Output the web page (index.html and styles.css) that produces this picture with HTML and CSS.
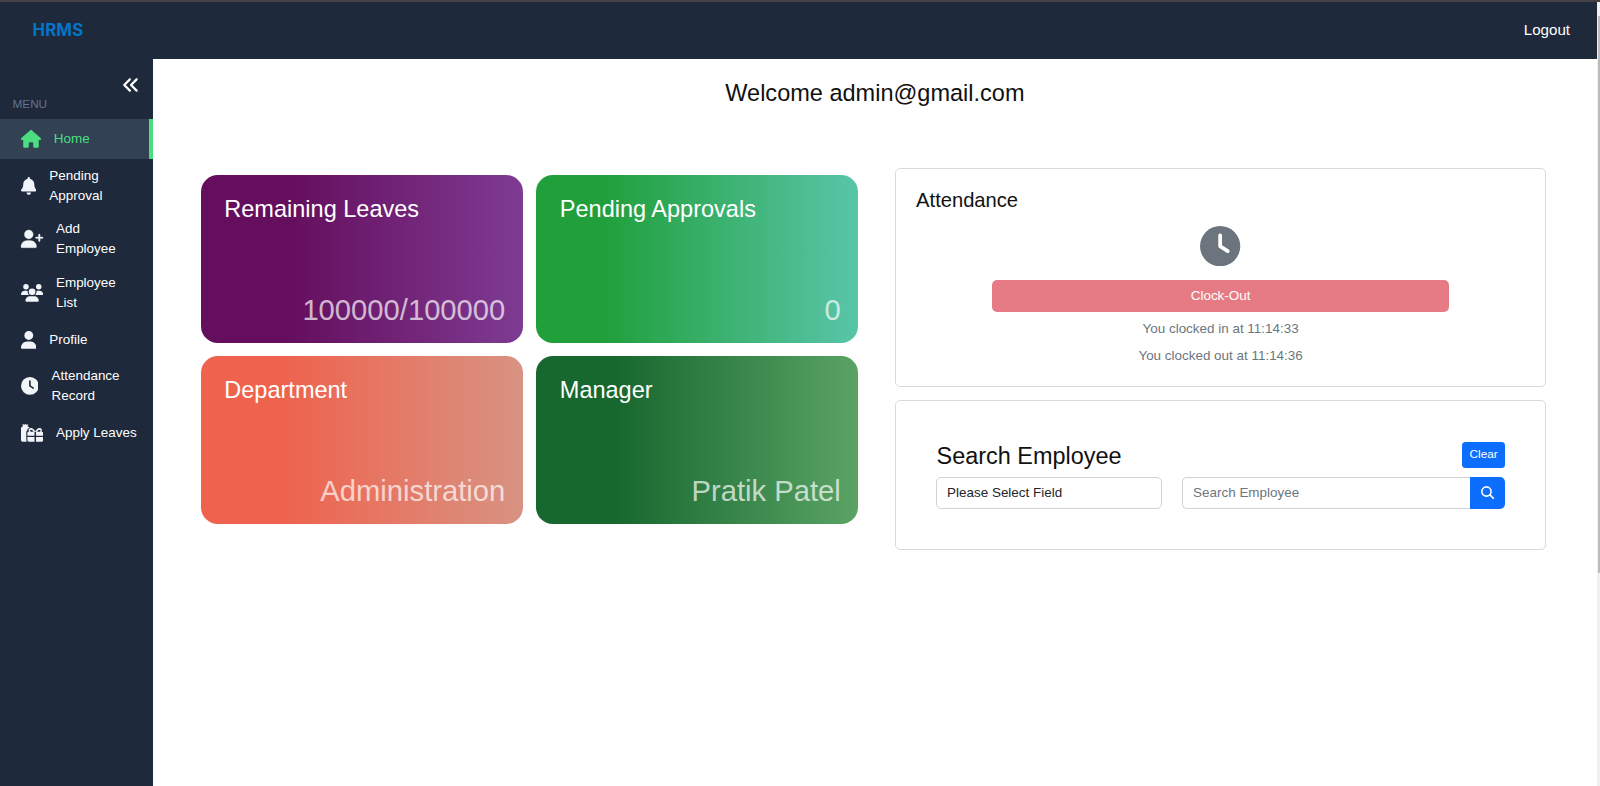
FILE: index.html
```html
<!DOCTYPE html>
<html lang="en">
<head>
<meta charset="utf-8">
<title>HRMS</title>
<link rel="stylesheet" href="styles.css">
</head>
<body>
<div class="app">
  <header class="navbar">
    <a class="brand">HRMS</a>
    <a class="logout">Logout</a>
  </header>
  <div class="body">
    <nav class="sidebar">
      <div class="collapse">
        <svg viewBox="0 0 512 512"><path d="M41.400 233.400c-12.500 12.500-12.500 32.800 0 45.300l160 160c12.500 12.500 32.800 12.500 45.300 0s12.500-32.800 0-45.300L109.300 256 246.600 118.600c12.500-12.500 12.500-32.800 0-45.300s-32.800-12.500-45.300 0l-160 160zm352-160l-160 160c-12.500 12.500-12.500 32.800 0 45.300l160 160c12.500 12.500 32.800 12.500 45.300 0s12.500-32.800 0-45.300L301.300 256 438.600 118.600c12.500-12.500 12.500-32.800 0-45.300s-32.800-12.500-45.300 0z"/></svg>
      </div>
      <div class="menu-title">MENU</div>
      <a class="item active">
        <svg class="w576" viewBox="0 0 576 512"><path d="M575.800 255.500c0 18-15 32.100-32 32.100h-32l.7 160.200c0 2.700-.2 5.400-.5 8.100V472c0 22.100-17.900 40-40 40H456c-1.100 0-2.200 0-3.300-.1c-1.400 .1-2.800 .1-4.200 .1H416 392c-22.100 0-40-17.900-40-40V448 384c0-17.700-14.300-32-32-32H256c-17.700 0-32 14.300-32 32v64 24c0 22.100-17.900 40-40 40H160 128.100c-1.500 0-3-.1-4.500-.2c-1.200 .1-2.400 .2-3.600 .2H104c-22.100 0-40-17.900-40-40V360c0-.9 0-1.900 .1-2.800V287.600H32c-18 0-32-14-32-32.100c0-9 3-17 10-24L266.400 8c7-7 15-8 22-8s15 2 21 7L564.800 231.500c8 7 12 15 11 24z"/></svg>
        <span>Home</span>
      </a>
      <a class="item two">
        <svg class="w448" viewBox="0 0 448 512"><path d="M224 0c-17.700 0-32 14.300-32 32V51.200C119 66 64 130.600 64 208v18.800c0 47-17.300 92.400-48.500 127.600l-7.400 8.300c-8.400 9.400-10.400 22.900-5.300 34.400S19.400 416 32 416H416c12.600 0 24-7.400 29.200-18.900s3.100-25-5.300-34.400l-7.400-8.300C401.300 319.200 384 273.900 384 226.800V208c0-77.400-55-142-128-156.800V32c0-17.700-14.300-32-32-32zm45.300 493.300c12-12 18.700-28.300 18.700-45.300H224 160c0 17 6.700 33.300 18.700 45.300s28.300 18.700 45.300 18.700s33.300-6.700 45.300-18.700z"/></svg>
        <span>Pending Approval</span>
      </a>
      <a class="item two">
        <svg class="w640 bold" viewBox="0 0 640 512"><path d="M96 128a128 128 0 1 1 256 0A128 128 0 1 1 96 128zM0 482.300C0 383.800 79.800 304 178.300 304h91.400C368.200 304 448 383.800 448 482.300c0 16.400-13.300 29.700-29.700 29.700H29.700C13.300 512 0 498.700 0 482.300zM504 312V248H440c-13.300 0-24-10.700-24-24s10.700-24 24-24h64V136c0-13.300 10.700-24 24-24s24 10.700 24 24v64h64c13.300 0 24 10.700 24 24s-10.700 24-24 24H552v64c0 13.300-10.700 24-24 24s-24-10.700-24-24z"/></svg>
        <span>Add Employee</span>
      </a>
      <a class="item two">
        <svg class="w640" viewBox="0 0 640 512"><path d="M144 0a80 80 0 1 1 0 160A80 80 0 1 1 144 0zM512 0a80 80 0 1 1 0 160A80 80 0 1 1 512 0zM0 298.700C0 239.800 47.800 192 106.700 192h42.700c15.900 0 31 3.500 44.600 9.700c-1.300 7.200-1.900 14.700-1.900 22.300c0 38.200 16.800 72.500 43.300 96H21.300C9.600 320 0 310.400 0 298.700zM405.300 320c26.600-23.500 43.300-57.800 43.300-96c0-7.600-.7-15-1.900-22.300c13.600-6.300 28.700-9.700 44.600-9.700h42.700C592.200 192 640 239.800 640 298.700c0 11.800-9.600 21.300-21.300 21.300H405.300zM224 224a96 96 0 1 1 192 0 96 96 0 1 1 -192 0zM128 485.300C128 411.700 187.700 352 261.300 352H378.700C452.300 352 512 411.700 512 485.300c0 14.700-11.900 26.700-26.700 26.700H154.700c-14.700 0-26.700-11.900-26.700-26.700z"/></svg>
        <span>Employee List</span>
      </a>
      <a class="item">
        <svg class="w448" viewBox="0 0 448 512"><path d="M224 256A128 128 0 1 0 224 0a128 128 0 1 0 0 256zm-45.700 48C79.800 304 0 383.800 0 482.300C0 498.700 13.300 512 29.700 512H418.300c16.400 0 29.700-13.300 29.700-29.700C448 383.800 368.200 304 269.700 304H178.300z"/></svg>
        <span>Profile</span>
      </a>
      <a class="item two">
        <svg class="w512" viewBox="0 0 512 512"><path d="M256 0a256 256 0 1 1 0 512A256 256 0 1 1 256 0zM232 120V256c0 8 4 15.500 10.700 20l96 64c11 7.400 25.900 4.400 33.300-6.700s4.400-25.900-6.700-33.300L280 243.200V120c0-13.300-10.700-24-24-24s-24 10.700-24 24z"/></svg>
        <span>Attendance Record</span>
      </a>
      <a class="item">
        <svg class="w640" viewBox="0 0 640 512"><path d="M58 50 32 24 64 8 94 20 124 0 154 20 188 8 214 26 188 50 200 68C222 76 238 88 246 106C206 120 180 150 178 190C160 205 152 222 152 250V460C152 480 156 498 166 512H48C20 512 0 492 0 464V128C0 98 20 76 46 68Z"/><path fill-rule="evenodd" d="M184 340V260C184 236 202 220 224 220H232C204 172 230 116 282 116C322 116 352 134 372 160L412 212 452 160C472 134 502 116 542 116C594 116 620 172 592 220H600C622 220 640 236 640 260V340H434V220H390V340ZM282 162C250 164 252 216 290 220H362L330 180C318 168 300 162 282 162ZM542 162C524 162 506 168 494 180L462 220H534C572 216 574 164 542 162ZM184 376H390V512H232C204 512 184 492 184 464ZM434 376H640V464C640 492 620 512 592 512H434Z"/></svg>
        <span>Apply Leaves</span>
      </a>
    </nav>
    <main class="main">
      <h1 class="welcome">Welcome admin@gmail.com</h1>
      <div class="dashboard">
        <section class="stats">
          <article class="stat purple"><h2>Remaining Leaves</h2><p>100000/100000</p></article>
          <article class="stat green"><h2>Pending Approvals</h2><p>0</p></article>
          <article class="stat red"><h2>Department</h2><p>Administration</p></article>
          <article class="stat forest"><h2>Manager</h2><p>Pratik Patel</p></article>
        </section>
        <section class="panels">
          <article class="panel attendance">
            <h3>Attendance</h3>
            <div class="clock">
              <svg viewBox="0 0 512 512"><path d="M256 0a256 256 0 1 1 0 512A256 256 0 1 1 256 0zM232 120V256c0 8 4 15.500 10.700 20l96 64c11 7.400 25.900 4.400 33.300-6.700s4.400-25.900-6.700-33.300L280 243.200V120c0-13.300-10.700-24-24-24s-24 10.700-24 24z"/></svg>
              <button class="clock-out">Clock-Out</button>
              <p>You clocked in at 11:14:33</p>
              <p>You clocked out at 11:14:36</p>
            </div>
          </article>
          <article class="panel search">
            <div class="search-head">
              <h2>Search Employee</h2>
              <button class="clear">Clear</button>
            </div>
            <div class="search-row">
              <div class="field">Please Select Field</div>
              <div class="group">
                <div class="input">Search Employee</div>
                <button class="go"><svg viewBox="0 0 16 16"><circle cx="6.500" cy="6.500" r="5.500"/><path d="M10.600 10.600 15 15"/></svg></button>
              </div>
            </div>
          </article>
        </section>
      </div>
    </main>
  </div>
</div>
<div class="scrollbar"><div class="thumb"></div></div>
</body>
</html>
```
FILE: styles.css
```css
* { box-sizing: border-box; margin: 0; padding: 0; }
body {
  display: flex;
  height: 786px;
  overflow: hidden;
  border-top: 2px solid #454247;
  background: #fff;
  color: #111;
  font: 13.44px/20.16px "Liberation Sans", Arial, sans-serif;
}
button { border: 0; font: inherit; color: #fff; }
svg { display: block; fill: currentColor; }
h1, h2, h3 { font-weight: 400; }

.app { display: flex; flex-direction: column; flex: 1; }
.navbar {
  display: flex;
  align-items: center;
  justify-content: space-between;
  height: 56.500px;
  padding: 0 26.500px 1px 32.500px;
  background: #1e293b;
}
.brand { color: #0275c9; font: 700 16.800px/20px Inter, sans-serif; letter-spacing: .15px; }
.logout { color: #fff; font-size: 15.120px; }
.body { display: flex; flex: 1; }

.sidebar { width: 153.300px; background: #1e293b; color: #fff; }
.collapse { display: flex; justify-content: flex-end; padding: 17.500px 13.500px 0 0; }
.collapse svg { width: 18px; height: 18px; }
.menu-title { padding: 0 0 0 12.500px; height: 25px; color: #64748b; font-size: 11.760px; }
.item {
  display: flex;
  align-items: center;
  gap: 13.200px;
  height: 39.900px;
  padding: 0 14px 0 20.600px;
}
.item.two { height: 53.600px; }
.item svg { flex: none; height: 17.800px; color: #f1f5f9; }
.w448 { width: 15.550px; }
.w512 { width: 17.800px; }
.w576 { width: 20px; }
.w640 { width: 22.200px; }
.bold { stroke: currentColor; stroke-width: 8; overflow: visible; }
.item.active { background: #334155; color: #4ade80; border-right: 4px solid #4ade80; }
.item.active svg { color: #4ade80; }

.main { flex: 1; padding-top: 20.500px; }
.welcome { text-align: center; font-size: 23.520px; line-height: 28px; }
.dashboard {
  display: grid;
  grid-template-columns: 657.500px 651px;
  gap: 36.800px;
  padding: 61px 0 0 47.500px;
}
.stats {
  display: grid;
  grid-template-columns: 1fr 1fr;
  grid-auto-rows: 168px;
  gap: 13.500px;
  padding-top: 6.500px;
}
.stat {
  display: flex;
  flex-direction: column;
  justify-content: space-between;
  padding: 20px 17.500px 15px 23.500px;
  border-radius: 16.800px;
  color: #fff;
}
.stat h2 { font-size: 23.520px; line-height: 28px; }
.stat p { text-align: right; font-size: 29.200px; line-height: 35px; color: rgba(255, 255, 255, .7); }
.purple { background: linear-gradient(90deg, #650e5d 27%, #7e3b93); }
.green { background: linear-gradient(90deg, #209f3b 20%, #59c5a9); }
.red { background: linear-gradient(90deg, #ef624d 24%, #d89382); }
.forest { background: linear-gradient(90deg, #17682f 25%, #5aa365); }

.panels { display: flex; flex-direction: column; gap: 13px; }
.panel { border: 1px solid #d8d9db; border-radius: 5px; }
.attendance { height: 219px; padding: 18.500px 20px; }
.attendance h3 { font-size: 20.160px; line-height: 24px; }
.clock { display: flex; flex-direction: column; align-items: center; padding-top: 14.500px; color: #6c757d; }
.clock svg { width: 40.300px; height: 40.300px; }
.clock-out { width: 457px; height: 32px; margin: 14px 0 7px; border-radius: 5px; background: #e77b85; }
.clock p { margin-bottom: 6.700px; }

.search { height: 149.500px; padding: 40.500px 40px; }
.search-head { display: flex; align-items: flex-start; justify-content: space-between; height: 35px; }
.search-head h2 { padding-left: .500px; font-size: 23.440px; line-height: 29px; }
.clear { width: 43px; height: 26px; border-radius: 3.500px; background: #0d6efd; font-size: 11.760px; }
.search-row { display: grid; grid-template-columns: 226px 323px; gap: 20px; }
.field, .input {
  height: 32px;
  padding: 5px 10px;
  border: 1px solid #ced4da;
  border-radius: 5px;
  color: #212529;
}
.group { display: flex; }
.input { flex: 1; border-right: 0; border-radius: 5px 0 0 5px; color: #6c757d; }
.go { display: grid; place-items: center; width: 35px; height: 32px; border-radius: 0 5px 5px 0; background: #0d6efd; }
.go svg { width: 13.440px; height: 13.440px; fill: none; stroke: #fff; stroke-width: 1.900; stroke-linecap: round; }

.scrollbar { width: 3.500px; padding: 14px 0 0 1.500px; background: #f1f1f1; }
.thumb { height: 557px; background: #bcbcbc; }
```
